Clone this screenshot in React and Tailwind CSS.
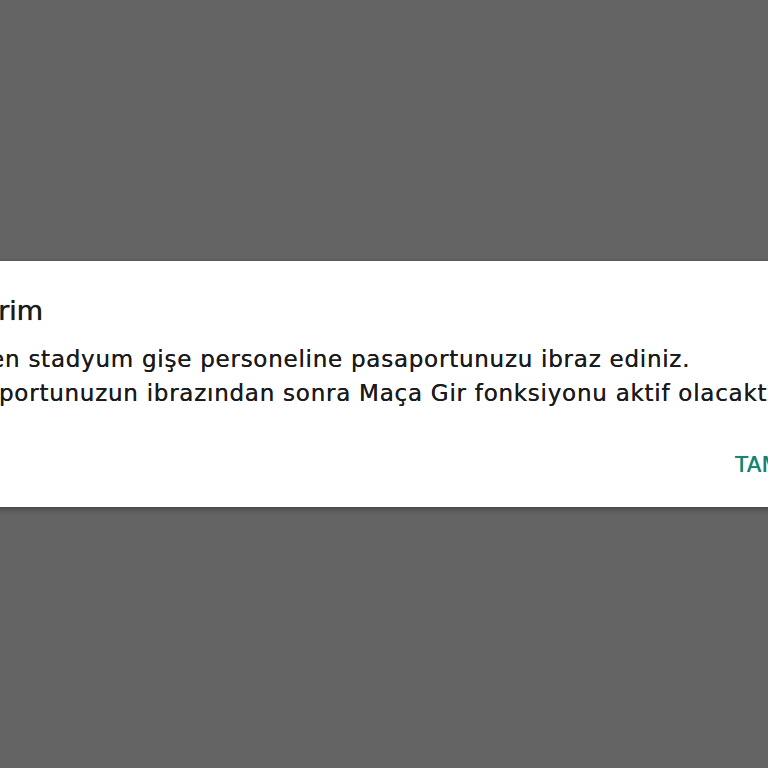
export default function App() {
  return (
    <div
      className="flex h-[768px] w-full items-center overflow-hidden bg-[#646464]"
      style={{ fontFamily: '"DejaVu Sans", "Noto Sans", sans-serif' }}
    >
      <div className="ml-[-70px] flex h-[246px] w-[960px] shrink-0 flex-col bg-white pl-[24px] pr-[24px] shadow-[0_2px_6px_rgba(0,0,0,0.35)]">
        <h2 className="-ml-[14px] mt-[32px] text-[27px] leading-[36px] text-[#1b1b1b] [text-shadow:0_0_0.8px_#1b1b1b]">
          Bildirim
        </h2>
        <div className="-ml-[11px] mt-[13px] text-[23px] leading-[34px] tracking-[0.75px] text-[#1b1b1b] [text-shadow:0_0_0.5px_#1b1b1b]">
          <p>Lütfen stadyum gişe personeline pasaportunuzu ibraz ediniz.</p>
          <p>Pasaportunuzun ibrazından sonra Maça Gir fonksiyonu aktif olacaktır.</p>
        </div>
        <div className="mb-[26px] mt-auto flex justify-end">
          <button className="mr-[52px] text-[21px] font-medium tracking-wide text-[#16826f] [text-shadow:0_0_0.7px_#16826f]">
            TAMAM
          </button>
        </div>
      </div>
    </div>
  );
}
